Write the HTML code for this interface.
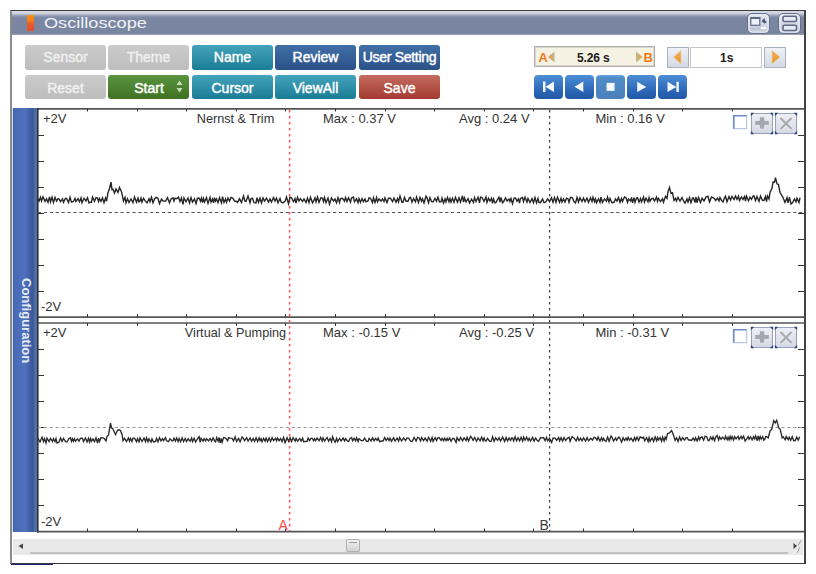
<!DOCTYPE html>
<html><head><meta charset="utf-8">
<style>
html,body{margin:0;padding:0;background:#fff;}
body{width:816px;height:574px;overflow:hidden;position:relative;font-family:"Liberation Sans",sans-serif;}
.abs{position:absolute;}
#win{position:absolute;left:10px;top:10px;width:792px;height:552px;border:1px solid #3a3a3a;border-left:2px solid #8c8c8c;border-right:2px solid #444;background:#fff;}
#title{position:absolute;left:12px;top:11px;width:792px;height:24px;background:linear-gradient(#d6dbe6 0px,#cbd1dc 2.5px,#a3abc0 4px,#8a94ad 5.5px,#7b87a2 7px,#7a86a1 21px,#727e99 22px,#a3abbf 24px);}
#title .t{position:absolute;left:31.5px;top:3px;font-size:15px;color:#eef1f6;transform:scaleX(1.21);transform-origin:0 0;}
#ticon{position:absolute;left:27px;top:15px;width:7px;height:16px;background:linear-gradient(#f68e14,#f28218 35%,#e85a26 55%,#e4522a);}
.tb{position:absolute;top:13px;width:21px;height:19px;border-radius:4px;background:linear-gradient(#b0b9cc,#8f9ab2);box-shadow:inset 0 0 0 1px #6c7891, inset 0 0 0 2px #c8cfdc;}
.btn{position:absolute;height:25px;width:81px;border-radius:3px;color:#fff;font-weight:normal;font-size:14px;line-height:25px;text-align:center;-webkit-text-stroke:0.45px currentColor;}
.gray{background:linear-gradient(#cbcbcb,#bdbdbd);color:#f0f0f0;}
.teal{background:linear-gradient(#43a3ba,#1b7c97);}
.blue{background:linear-gradient(#406fa6,#2a5188);}
.green{background:linear-gradient(#5a9440,#3f7222);}
.red{background:linear-gradient(#c56c60,#a33a30);}
.mb{position:absolute;top:75px;width:29px;height:24px;border-radius:4px;background:linear-gradient(#4d8fd6,#2a64b4 70%,#2258a8);}
#plots{position:absolute;left:0;top:0;}
</style></head>
<body>
<div id="win"></div>
<div id="title"><div class="t">Oscilloscope</div></div>
<div id="ticon"></div>
<svg class="abs" style="left:740px;top:10px" width="66" height="26">
 <defs><linearGradient id="tbg" x1="0" y1="0" x2="0" y2="1"><stop offset="0" stop-color="#e2e6ee"/><stop offset="1" stop-color="#c3cad8"/></linearGradient></defs>
 <rect x="7.5" y="3.5" width="22" height="20" rx="4.5" fill="url(#tbg)" stroke="#66728c"/>
 <rect x="9" y="5" width="19" height="17" rx="3.5" fill="none" stroke="#eef1f6" stroke-width="0.8"/>
 <rect x="10.8" y="7.8" width="9" height="7.5" fill="#eef1f7" stroke="#5d6886" stroke-width="1.2"/>
 <rect x="10.2" y="7" width="10.2" height="2" fill="#5d6886"/>
 <path d="M21.5 11 L24.5 8 L25 10.5 L27 12 L24.5 13.5Z" fill="#4a5478"/>
 <rect x="21" y="17" width="5" height="2" fill="#fafbfd"/>
 <rect x="10" y="17" width="10" height="3" fill="#c0c7d6"/>
 <rect x="38.5" y="3.5" width="22" height="20" rx="4.5" fill="url(#tbg)" stroke="#66728c"/>
 <rect x="40" y="5" width="19" height="17" rx="3.5" fill="none" stroke="#eef1f6" stroke-width="0.8"/>
 <rect x="43" y="6.2" width="13.5" height="5.3" rx="1.5" fill="#e6eaf2" stroke="#5f6a86" stroke-width="1.6"/>
 <rect x="43" y="15.2" width="13.5" height="5.3" rx="1.5" fill="#e6eaf2" stroke="#5f6a86" stroke-width="1.6"/>
</svg>

<div class="btn gray" style="left:25px;top:45px">Sensor</div>
<div class="btn gray" style="left:108px;top:45px">Theme</div>
<div class="btn teal" style="left:192px;top:45px">Name</div>
<div class="btn blue" style="left:275px;top:45px">Review</div>
<div class="btn blue" style="left:359px;top:45px;letter-spacing:-0.3px">User Setting</div>
<div class="btn gray" style="left:25px;top:75px;height:24px;line-height:26px">Reset</div>
<div class="btn green" style="left:108px;top:75px;height:24px;line-height:26px;text-indent:1px">Start</div>
<svg class="abs" style="left:176px;top:80px" width="8" height="14"><path d="M0.5 5 L3.5 0.5 L6.5 5Z M0.5 8 L3.5 12.5 L6.5 8Z" fill="#c6dcb8"/></svg>
<div class="btn teal" style="left:192px;top:75px;height:24px;line-height:26px">Cursor</div>
<div class="btn teal" style="left:275px;top:75px;height:24px;line-height:26px">ViewAll</div>
<div class="btn red" style="left:359px;top:75px;height:24px;line-height:26px">Save</div>

<div class="abs" style="left:534px;top:46px;width:119px;height:19px;border:1px solid #b0b0b0;box-shadow:inset 0 0 0 1px #d8d6cc;background:#f5f2e3;"></div>
<div class="abs" style="left:577px;top:48.5px;font-size:12px;font-weight:bold;line-height:19px;color:#202020;letter-spacing:-0.15px">5.26 s</div>

<div class="abs" style="left:667px;top:47px;width:20px;height:19px;border:1px solid #aab2c2;background:linear-gradient(#eef1f6,#d3d9e5);"></div>
<div class="abs" style="left:690px;top:47px;width:70px;height:19px;border:1px solid #c4c4c4;background:#fff;"></div>
<div class="abs" style="left:764px;top:47px;width:20px;height:19px;border:1px solid #aab2c2;background:linear-gradient(#eef1f6,#d3d9e5);"></div>
<div class="abs" style="left:720px;top:47.5px;font-size:12px;font-weight:bold;line-height:20px;color:#202020">1s</div>

<svg class="abs" style="left:534px;top:46px" width="260" height="24">
 <defs>
  <linearGradient id="og" x1="0" y1="0" x2="1" y2="0"><stop offset="0" stop-color="#f39a3a"/><stop offset="1" stop-color="#b8b89a"/></linearGradient>
  <linearGradient id="og2" x1="0" y1="0" x2="1" y2="0"><stop offset="0" stop-color="#b8b89a"/><stop offset="1" stop-color="#f39a3a"/></linearGradient>
  <linearGradient id="tg" x1="0" y1="0" x2="0" y2="1"><stop offset="0" stop-color="#f0b060"/><stop offset="1" stop-color="#e89030"/></linearGradient>
 </defs>
 <text x="4.5" y="16.4" font-family="Liberation Sans" font-weight="bold" font-size="13" fill="#f07a1a">A</text>
 <path d="M14 11 L20.5 5.5 L20.5 16.5Z" fill="url(#og)"/>
 <path d="M108.5 11 L102 5.5 L102 16.5Z" fill="url(#og2)"/>
 <text x="109.5" y="16.4" font-family="Liberation Sans" font-weight="bold" font-size="13" fill="#f07a1a">B</text>
 <path d="M139.5 11 L147 4.5 L147 18Z" fill="url(#tg)" stroke="#e8d090" stroke-width="0.8"/>
 <path d="M246 11 L238 4.5 L238 18Z" fill="url(#tg)" stroke="#e8d090" stroke-width="0.8"/>
</svg>
<div class="mb" style="left:534px"></div>
<div class="mb" style="left:565px"></div>
<div class="mb" style="left:596px;background:linear-gradient(#62a6e4 0,#4f8cc8 3px,#4a80bc)"></div>
<div class="mb" style="left:627px"></div>
<div class="mb" style="left:658px"></div>

<svg class="abs" style="left:530px;top:70px" width="170" height="34" fill="#f4f8fc">
 <rect x="13" y="11.5" width="2.5" height="10.5"/>
 <path d="M15.5 16.8 L24 11.5 L24 22Z"/>
 <path d="M44.5 16.8 L53.3 11.5 L53.3 22Z"/>
 <rect x="76.6" y="12.9" width="8" height="8"/>
 <path d="M116.3 16.9 L107.2 11.8 L107.2 22Z"/>
 <path d="M146.4 16.9 L137.5 11.8 L137.5 22Z"/>
 <rect x="146.4" y="11.8" width="2.4" height="10.2"/>
</svg>
<svg id="plots" width="816" height="574">
 <!-- sidebar -->
 <defs><linearGradient id="sbg" x1="13" y1="0" x2="37" y2="0" gradientUnits="userSpaceOnUse">
  <stop offset="0" stop-color="#4060a6"/><stop offset="0.12" stop-color="#4a6bb6"/><stop offset="0.5" stop-color="#4f71bd"/>
  <stop offset="0.72" stop-color="#3f5ea2"/><stop offset="0.84" stop-color="#395896"/><stop offset="0.92" stop-color="#5173ab"/><stop offset="1" stop-color="#4a68a0"/></linearGradient></defs>
 <rect x="12" y="108" width="1" height="424" fill="#d4dbe8"/>
 <rect x="13" y="108" width="24" height="424" fill="url(#sbg)"/>
 <text transform="translate(22,278) rotate(90)" font-family="Liberation Sans" font-weight="bold" font-size="13" fill="#e6ebf4">Configuration</text>
 <!-- plot frames -->
 <g stroke="#555" stroke-width="1.7" fill="none">
  <line x1="37" y1="108.8" x2="804" y2="108.8"/>
  <line x1="37" y1="317.1" x2="804" y2="317.1"/>
  <line x1="37" y1="323.0" x2="804" y2="323.0"/>
  <line x1="37" y1="531.7" x2="804" y2="531.7"/>
 </g>
 <g stroke="#333" stroke-width="1.6" fill="none">
  <line x1="37.8" y1="108" x2="37.8" y2="532.5"/>
 </g>
 <g stroke="#333" stroke-width="1">
<line x1="87.5" y1="108.5" x2="87.5" y2="111.5"/>
<line x1="87.5" y1="314" x2="87.5" y2="317"/>
<line x1="137.5" y1="108.5" x2="137.5" y2="111.5"/>
<line x1="137.5" y1="314" x2="137.5" y2="317"/>
<line x1="186.5" y1="108.5" x2="186.5" y2="111.5"/>
<line x1="186.5" y1="314" x2="186.5" y2="317"/>
<line x1="236.5" y1="108.5" x2="236.5" y2="111.5"/>
<line x1="236.5" y1="314" x2="236.5" y2="317"/>
<line x1="285.5" y1="108.5" x2="285.5" y2="111.5"/>
<line x1="285.5" y1="314" x2="285.5" y2="317"/>
<line x1="335.5" y1="108.5" x2="335.5" y2="111.5"/>
<line x1="335.5" y1="314" x2="335.5" y2="317"/>
<line x1="385.5" y1="108.5" x2="385.5" y2="111.5"/>
<line x1="385.5" y1="314" x2="385.5" y2="317"/>
<line x1="434.5" y1="108.5" x2="434.5" y2="111.5"/>
<line x1="434.5" y1="314" x2="434.5" y2="317"/>
<line x1="484.5" y1="108.5" x2="484.5" y2="111.5"/>
<line x1="484.5" y1="314" x2="484.5" y2="317"/>
<line x1="533.5" y1="108.5" x2="533.5" y2="111.5"/>
<line x1="533.5" y1="314" x2="533.5" y2="317"/>
<line x1="583.5" y1="108.5" x2="583.5" y2="111.5"/>
<line x1="583.5" y1="314" x2="583.5" y2="317"/>
<line x1="633.5" y1="108.5" x2="633.5" y2="111.5"/>
<line x1="633.5" y1="314" x2="633.5" y2="317"/>
<line x1="682.5" y1="108.5" x2="682.5" y2="111.5"/>
<line x1="682.5" y1="314" x2="682.5" y2="317"/>
<line x1="732.5" y1="108.5" x2="732.5" y2="111.5"/>
<line x1="732.5" y1="314" x2="732.5" y2="317"/>
<line x1="38" y1="135.5" x2="44" y2="135.5"/>
<line x1="798" y1="135.5" x2="804" y2="135.5"/>
<line x1="38" y1="161.5" x2="44" y2="161.5"/>
<line x1="798" y1="161.5" x2="804" y2="161.5"/>
<line x1="38" y1="187.5" x2="44" y2="187.5"/>
<line x1="798" y1="187.5" x2="804" y2="187.5"/>
<line x1="38" y1="213.5" x2="44" y2="213.5"/>
<line x1="798" y1="213.5" x2="804" y2="213.5"/>
<line x1="38" y1="239.5" x2="44" y2="239.5"/>
<line x1="798" y1="239.5" x2="804" y2="239.5"/>
<line x1="38" y1="265.5" x2="44" y2="265.5"/>
<line x1="798" y1="265.5" x2="804" y2="265.5"/>
<line x1="38" y1="291.5" x2="44" y2="291.5"/>
<line x1="798" y1="291.5" x2="804" y2="291.5"/>
<line x1="87.5" y1="323" x2="87.5" y2="326"/>
<line x1="87.5" y1="528.5" x2="87.5" y2="531.5"/>
<line x1="137.5" y1="323" x2="137.5" y2="326"/>
<line x1="137.5" y1="528.5" x2="137.5" y2="531.5"/>
<line x1="186.5" y1="323" x2="186.5" y2="326"/>
<line x1="186.5" y1="528.5" x2="186.5" y2="531.5"/>
<line x1="236.5" y1="323" x2="236.5" y2="326"/>
<line x1="236.5" y1="528.5" x2="236.5" y2="531.5"/>
<line x1="285.5" y1="323" x2="285.5" y2="326"/>
<line x1="285.5" y1="528.5" x2="285.5" y2="531.5"/>
<line x1="335.5" y1="323" x2="335.5" y2="326"/>
<line x1="335.5" y1="528.5" x2="335.5" y2="531.5"/>
<line x1="385.5" y1="323" x2="385.5" y2="326"/>
<line x1="385.5" y1="528.5" x2="385.5" y2="531.5"/>
<line x1="434.5" y1="323" x2="434.5" y2="326"/>
<line x1="434.5" y1="528.5" x2="434.5" y2="531.5"/>
<line x1="484.5" y1="323" x2="484.5" y2="326"/>
<line x1="484.5" y1="528.5" x2="484.5" y2="531.5"/>
<line x1="533.5" y1="323" x2="533.5" y2="326"/>
<line x1="533.5" y1="528.5" x2="533.5" y2="531.5"/>
<line x1="583.5" y1="323" x2="583.5" y2="326"/>
<line x1="583.5" y1="528.5" x2="583.5" y2="531.5"/>
<line x1="633.5" y1="323" x2="633.5" y2="326"/>
<line x1="633.5" y1="528.5" x2="633.5" y2="531.5"/>
<line x1="682.5" y1="323" x2="682.5" y2="326"/>
<line x1="682.5" y1="528.5" x2="682.5" y2="531.5"/>
<line x1="732.5" y1="323" x2="732.5" y2="326"/>
<line x1="732.5" y1="528.5" x2="732.5" y2="531.5"/>
<line x1="38" y1="349.5" x2="44" y2="349.5"/>
<line x1="798" y1="349.5" x2="804" y2="349.5"/>
<line x1="38" y1="375.5" x2="44" y2="375.5"/>
<line x1="798" y1="375.5" x2="804" y2="375.5"/>
<line x1="38" y1="401.5" x2="44" y2="401.5"/>
<line x1="798" y1="401.5" x2="804" y2="401.5"/>
<line x1="38" y1="427.5" x2="44" y2="427.5"/>
<line x1="798" y1="427.5" x2="804" y2="427.5"/>
<line x1="38" y1="453.5" x2="44" y2="453.5"/>
<line x1="798" y1="453.5" x2="804" y2="453.5"/>
<line x1="38" y1="479.5" x2="44" y2="479.5"/>
<line x1="798" y1="479.5" x2="804" y2="479.5"/>
<line x1="38" y1="505.5" x2="44" y2="505.5"/>
<line x1="798" y1="505.5" x2="804" y2="505.5"/>
 </g>
 <g stroke="#555" stroke-width="1" stroke-dasharray="3.2,2.7">
  <line x1="38" y1="212.5" x2="804" y2="212.5"/>
  <line x1="38" y1="427.5" x2="804" y2="427.5" stroke="#999"/>
 </g>
 <g stroke="#ff5252" stroke-width="1.5" stroke-dasharray="2.5,3.5">
  <line x1="289.6" y1="110" x2="289.6" y2="531"/>
 </g>
 <g stroke="#3a3a3a" stroke-width="1.2" stroke-dasharray="2.5,3.5">
  <line x1="549.6" y1="110" x2="549.6" y2="531"/>
 </g>
 <polyline points="38.0,198.8 39.0,201.1 40.5,197.3 41.5,201.0 43.0,196.8 45.0,201.4 46.5,198.8 48.0,202.3 49.5,196.9 50.5,201.9 52.0,197.2 53.5,202.4 55.0,197.3 56.5,201.1 58.0,198.8 59.0,198.9 60.5,201.6 62.5,198.9 63.5,202.4 65.5,198.3 66.5,198.4 68.5,202.5 70.0,197.2 71.5,202.1 73.5,201.5 75.0,198.3 76.0,201.4 78.0,198.7 79.5,201.7 81.0,198.0 82.0,202.7 84.0,198.3 86.0,201.0 87.5,197.8 89.0,202.9 90.0,202.2 91.5,202.2 92.5,197.0 94.5,201.2 96.0,197.6 97.5,198.0 98.5,201.5 99.5,198.6 101.0,201.4 102.5,197.8 104.0,202.6 105.5,198.0 106.5,201.2 108.0,192.7 109.5,188.5 111.0,182.2 112.0,189.7 113.0,189.2 114.5,193.1 116.0,189.0 118.0,192.4 119.5,187.5 121.5,191.7 123.5,200.9 125.0,197.4 126.0,202.9 127.5,198.7 129.0,202.5 131.0,199.0 133.0,202.6 134.5,197.0 136.5,202.2 138.0,198.1 139.0,202.0 140.0,201.0 141.0,198.0 142.0,202.2 143.5,198.2 145.5,201.4 147.0,202.8 149.0,198.8 150.0,201.8 151.5,197.2 153.0,202.8 154.5,198.9 156.0,197.4 158.0,198.3 159.5,203.6 161.5,199.1 163.0,201.0 164.5,201.1 165.5,201.3 167.5,197.7 169.5,202.8 171.0,199.0 173.0,197.8 174.0,201.1 175.0,198.3 177.0,198.5 178.5,197.1 180.0,201.6 181.5,198.0 183.0,204.5 184.0,197.9 186.0,201.8 188.0,198.0 189.5,203.0 191.0,197.6 192.5,202.2 194.5,198.9 196.0,203.5 197.5,198.2 199.0,198.0 200.5,201.3 201.5,198.0 202.5,202.6 203.5,198.5 204.5,202.0 206.5,197.6 208.0,203.4 210.0,197.4 211.0,202.1 212.5,199.0 213.5,202.8 214.5,197.7 215.5,201.0 216.5,199.0 218.0,202.7 219.5,197.7 221.5,202.8 222.5,196.6 224.0,202.3 225.5,199.0 226.5,202.3 228.0,198.1 229.5,201.1 231.0,197.4 233.0,198.3 234.5,201.1 236.0,201.2 237.5,202.4 239.5,198.8 241.5,202.4 243.5,196.0 245.0,201.2 246.0,201.5 248.0,195.9 250.0,202.7 251.0,198.5 252.5,198.2 254.0,202.7 256.0,202.9 257.0,197.6 258.5,202.3 260.0,198.2 261.5,203.0 263.0,197.9 264.5,201.1 266.5,198.1 268.5,202.1 270.0,198.9 271.5,202.0 273.5,197.5 275.0,201.0 276.5,198.0 278.0,202.8 280.0,198.4 281.0,201.8 283.0,202.9 285.0,201.4 286.5,197.1 288.5,203.8 290.0,197.2 291.5,197.8 293.5,201.7 295.0,198.6 296.0,203.0 297.5,197.2 299.0,201.0 300.5,198.7 302.5,201.4 304.0,199.0 306.0,202.6 307.5,198.0 309.0,202.6 310.5,197.2 312.5,202.8 313.5,201.2 315.0,197.8 316.0,201.8 317.5,197.0 319.0,202.3 321.0,197.7 322.5,198.2 323.5,201.6 324.5,197.5 326.0,202.7 328.0,198.0 329.5,204.2 331.5,197.8 333.5,201.0 335.0,199.0 336.5,202.9 338.0,197.7 339.5,202.5 340.5,198.6 342.5,198.3 344.5,201.2 345.5,197.5 347.0,201.6 348.5,197.8 350.5,202.1 351.5,198.0 353.5,197.0 354.5,201.8 356.5,198.8 358.0,202.7 359.0,198.5 360.5,202.4 362.0,198.6 363.5,201.7 365.0,198.9 366.0,201.9 368.0,201.0 369.0,197.8 370.5,198.3 372.5,202.5 373.5,197.8 375.0,202.4 376.5,197.6 377.5,201.8 379.0,199.0 381.0,201.1 382.5,198.9 384.0,201.5 385.0,197.9 387.0,202.5 388.5,198.2 390.5,198.2 392.5,201.7 394.0,197.9 396.0,202.2 397.5,198.5 398.5,201.9 400.0,196.0 402.0,202.2 403.0,202.2 404.5,197.3 406.0,201.3 408.0,201.2 409.5,197.6 410.5,197.3 412.0,202.2 413.5,198.5 415.5,201.8 416.5,197.0 418.5,202.5 420.0,197.4 421.5,201.1 422.5,198.8 424.0,203.0 426.0,196.2 427.0,197.6 428.5,202.8 430.0,197.6 431.5,201.4 433.0,201.9 435.0,198.5 436.5,201.3 438.0,197.2 439.5,202.0 441.0,201.9 442.0,198.0 443.5,203.0 445.0,198.9 446.0,202.0 447.5,197.5 449.0,201.8 450.0,198.6 451.0,202.1 452.5,198.2 454.0,202.2 455.5,197.4 457.5,202.2 459.0,197.8 460.5,202.1 462.5,195.8 463.5,202.1 464.5,197.9 466.0,202.0 468.0,198.7 469.5,203.0 471.5,199.1 473.5,202.3 474.5,197.7 476.0,201.5 478.0,197.2 479.5,202.9 480.5,197.2 482.0,197.5 484.0,201.4 486.0,197.0 487.0,202.4 488.5,198.3 490.0,201.0 491.5,198.2 492.5,203.4 493.5,199.0 495.0,202.9 496.0,202.5 498.0,198.7 499.0,197.2 500.0,202.2 501.0,197.4 502.5,202.7 504.0,201.0 505.5,197.8 507.0,201.0 509.0,198.9 510.0,201.4 511.0,198.5 512.5,203.7 514.0,198.1 515.5,197.9 517.0,201.2 518.5,198.9 519.5,203.0 520.5,198.4 522.5,197.5 523.5,201.5 525.0,197.2 527.0,202.1 528.0,198.4 530.0,202.5 532.0,198.6 533.5,202.8 535.0,197.5 536.5,202.9 538.0,198.4 539.0,202.3 540.5,202.6 542.5,198.9 544.0,202.6 546.0,201.8 547.5,198.8 549.5,201.4 551.5,197.7 553.0,202.2 554.5,197.6 556.0,202.4 557.5,197.1 559.5,202.3 561.0,198.3 562.0,202.0 563.5,198.9 565.0,202.0 566.5,198.2 568.0,198.7 569.0,202.2 570.5,197.4 572.5,197.8 574.0,201.5 575.5,202.9 577.0,197.5 578.5,202.1 580.0,197.8 582.0,201.5 583.5,198.1 585.0,201.7 587.0,198.1 588.5,202.3 590.5,197.8 592.0,201.5 593.0,197.2 594.5,201.6 595.5,198.9 596.5,202.7 598.5,198.8 600.0,202.3 601.0,197.2 602.5,202.4 604.5,198.9 606.5,201.2 607.5,197.2 609.0,202.0 610.0,198.4 612.0,202.7 614.0,202.3 615.5,199.0 617.0,201.1 618.5,197.6 620.0,202.3 621.5,198.4 622.5,201.5 624.5,197.0 626.0,197.7 627.5,202.4 628.5,199.0 630.5,201.0 631.5,197.4 632.5,202.8 634.0,197.6 635.0,202.3 636.5,198.1 637.5,197.7 639.0,202.1 640.5,198.5 641.5,202.0 643.5,197.2 644.5,202.1 646.0,198.2 648.0,201.8 649.0,197.7 650.0,201.2 651.5,198.6 653.0,198.3 654.5,201.1 656.5,197.1 657.5,201.4 658.5,198.4 660.5,201.6 662.5,198.7 663.5,202.1 665.5,196.2 667.0,198.4 668.0,191.6 669.5,187.6 671.0,193.4 672.5,192.8 674.0,200.4 675.5,198.3 676.5,201.0 678.0,197.3 680.0,201.1 682.0,197.5 683.5,201.0 685.0,203.2 687.0,198.9 688.0,202.1 689.5,197.8 691.0,202.6 692.5,198.0 693.5,198.0 695.0,202.5 696.0,197.0 697.0,202.7 698.5,197.4 700.5,202.5 702.0,198.3 704.0,200.9 706.0,197.1 708.0,196.2 709.5,202.0 711.5,197.0 713.0,197.6 714.5,198.5 715.5,200.5 717.5,198.2 719.0,200.9 720.0,197.6 721.5,200.4 723.0,201.9 724.5,197.8 725.5,196.2 727.0,201.7 729.0,196.5 730.5,200.0 732.0,196.4 734.0,199.6 735.5,196.1 737.0,199.4 738.5,196.2 739.5,200.6 741.5,196.9 743.0,199.5 744.5,196.5 745.5,201.0 746.5,196.0 748.5,200.7 750.0,197.1 751.5,199.3 753.0,196.2 754.0,195.8 755.5,200.5 757.0,196.4 759.0,201.4 760.5,196.0 762.5,200.5 764.0,200.3 765.5,196.5 766.5,201.6 767.5,195.9 769.0,199.0 770.0,192.5 772.0,188.4 773.0,182.1 774.5,182.2 775.5,177.7 777.0,183.8 778.5,184.5 780.0,192.5 781.5,194.9 783.0,197.5 785.0,202.4 787.0,197.7 788.0,202.8 789.5,197.3 791.0,204.0 792.5,202.8 794.5,199.0 796.0,201.8 797.0,198.2 799.0,202.6 800.0,197.7" fill="none" stroke="#262626" stroke-width="1.4"/>
 <polyline points="38.0,438.4 40.0,442.0 42.0,437.1 43.5,441.6 44.5,438.6 46.0,443.0 47.0,438.2 49.0,441.6 50.5,438.4 52.5,441.4 53.5,438.7 55.0,441.6 56.0,438.6 57.0,443.1 59.0,442.1 60.5,438.1 62.0,441.4 63.5,438.4 65.5,441.6 67.0,441.9 69.0,438.5 70.5,437.8 71.5,441.4 72.5,438.9 73.5,441.3 74.5,438.8 75.5,441.3 77.5,438.9 79.0,441.1 80.5,438.2 82.5,438.3 83.5,441.5 85.5,438.0 87.0,442.0 88.5,438.3 89.5,442.0 90.5,438.5 91.5,441.3 93.0,438.9 94.5,441.7 96.0,437.8 97.5,443.1 98.5,438.1 99.5,441.5 101.0,437.8 103.0,437.9 104.0,438.3 106.0,441.0 107.0,436.4 108.5,435.2 110.5,423.2 111.5,428.0 112.5,428.3 114.0,431.2 115.5,434.7 117.5,430.3 119.0,429.8 120.5,430.6 122.0,434.5 123.0,440.6 124.5,438.3 126.5,441.4 128.5,437.9 129.5,441.1 130.5,438.4 132.0,441.5 133.0,438.1 134.5,438.1 136.5,441.7 137.5,438.6 139.0,441.8 140.0,437.8 142.0,441.5 144.0,438.1 145.5,441.6 146.5,437.8 148.0,441.8 149.0,438.8 151.0,442.1 152.0,438.9 153.5,442.0 155.5,441.4 156.5,438.4 158.0,441.8 159.5,437.7 161.0,440.9 162.5,438.7 163.5,440.7 165.5,437.6 166.5,440.8 168.5,441.7 170.0,438.8 172.0,440.8 173.0,440.8 174.0,438.2 175.5,441.1 176.6,438.1 178.1,441.6 179.1,438.4 180.6,441.8 182.1,437.8 183.6,441.6 185.1,438.5 186.6,441.5 188.1,438.8 190.1,441.2 191.6,438.1 192.6,441.5 194.1,438.2 195.6,442.0 197.6,438.6 199.1,436.6 200.1,442.4 201.1,438.3 203.1,441.1 204.1,438.6 205.6,440.9 206.6,438.8 208.6,440.9 210.1,438.5 211.6,441.2 213.1,437.8 214.6,441.1 215.6,441.9 216.6,437.6 218.1,441.1 219.1,437.5 220.1,443.0 221.1,438.5 222.1,442.3 223.6,437.6 225.6,438.1 227.6,440.7 228.6,437.6 230.1,438.1 232.1,438.3 233.6,441.0 235.1,436.9 236.6,441.4 238.6,438.4 240.1,441.8 242.1,436.9 243.1,437.9 244.6,440.7 246.6,437.7 248.1,441.1 250.1,438.0 251.6,441.3 253.1,438.5 254.6,441.4 256.1,437.8 257.6,441.5 259.1,437.9 260.1,440.6 261.1,438.7 262.1,441.7 263.6,438.3 265.1,441.2 266.1,438.2 267.6,441.5 269.1,437.9 270.6,441.5 272.1,437.6 273.6,440.6 275.6,438.2 276.6,440.8 277.6,438.1 279.1,440.7 280.6,438.6 282.1,441.6 283.6,437.5 285.1,442.6 287.1,437.7 288.6,441.2 290.1,437.7 291.6,441.4 293.1,437.5 295.1,441.2 296.1,438.4 297.6,441.3 299.6,438.4 301.1,441.0 302.6,438.1 303.6,441.7 305.1,441.5 307.1,441.3 308.1,438.2 309.6,440.7 311.1,438.2 312.6,438.6 313.6,440.7 314.6,438.7 315.6,440.7 317.1,438.1 319.1,440.8 320.6,437.5 322.1,441.0 323.1,437.8 324.6,441.0 326.1,438.6 327.1,437.5 328.6,441.2 330.1,438.5 331.6,441.8 332.6,436.7 334.1,440.5 335.1,442.2 336.6,438.4 337.6,441.7 339.6,438.5 341.1,441.0 343.1,438.1 344.6,440.9 345.6,438.6 347.6,441.2 348.6,441.5 350.1,438.2 351.6,437.7 352.6,440.7 354.1,438.3 355.6,440.9 356.6,437.8 358.1,441.5 359.1,438.6 361.1,440.5 363.1,440.6 364.6,438.1 366.6,441.3 368.1,441.4 369.1,438.4 371.1,440.9 372.6,437.8 374.1,440.8 375.6,438.4 377.1,440.4 378.1,438.0 379.6,441.6 381.6,441.0 383.1,441.1 384.6,437.6 386.1,440.5 387.6,438.1 389.1,440.6 390.1,438.1 391.6,441.2 393.6,437.7 395.1,441.0 397.1,438.0 398.6,441.1 399.6,437.5 401.6,441.0 403.6,437.9 405.6,440.5 407.1,438.0 408.6,438.2 410.6,441.1 412.1,441.5 414.1,437.4 416.1,441.0 417.6,437.3 419.1,438.0 420.6,440.9 421.6,437.5 423.6,440.6 425.1,438.0 427.1,441.2 428.6,437.3 430.6,441.3 432.1,437.4 433.1,441.4 435.1,437.7 436.6,440.6 437.6,438.1 439.1,437.6 441.1,440.5 442.1,438.3 443.6,440.7 444.6,438.2 446.1,440.6 447.1,438.4 448.1,440.3 449.6,437.9 451.1,441.3 452.6,438.5 454.1,438.5 456.1,442.5 457.1,437.6 459.1,440.9 460.6,437.5 462.6,440.8 464.1,437.8 466.1,440.5 467.1,437.3 468.6,441.0 470.6,436.3 471.6,437.7 473.1,440.3 474.6,437.5 476.6,441.3 478.1,437.8 480.1,440.8 481.6,437.2 483.1,440.8 484.1,437.9 485.1,440.6 486.1,441.1 487.6,438.3 489.6,441.4 491.1,441.4 492.6,436.7 494.1,441.4 495.6,437.9 497.6,440.3 499.1,437.7 500.6,441.0 502.6,437.1 504.6,441.4 506.1,437.4 507.6,440.9 509.1,437.9 510.6,440.5 511.6,438.0 512.6,437.9 513.6,441.0 515.1,436.8 516.6,440.8 518.1,437.8 519.6,440.9 521.1,437.3 522.6,441.0 523.6,437.0 525.1,440.2 526.6,437.1 528.1,440.5 529.1,438.3 530.6,441.1 532.6,437.4 534.1,441.1 535.6,438.0 537.1,440.2 538.6,441.3 540.6,437.6 542.1,437.8 543.6,437.6 545.1,440.6 546.6,437.4 547.6,440.9 549.6,438.3 551.6,442.4 553.1,438.0 555.1,438.1 556.6,440.4 558.6,437.6 559.6,440.8 561.1,437.7 562.6,441.0 564.1,437.5 565.6,440.5 567.6,438.0 569.1,437.3 570.1,441.3 572.1,436.5 574.1,438.2 576.1,440.9 577.6,437.2 579.1,440.6 580.6,438.1 582.1,440.9 583.6,437.9 585.6,441.0 587.1,437.6 588.6,440.8 590.6,438.3 592.5,440.1 594.0,437.3 595.5,437.8 597.0,440.2 598.1,437.1 600.0,441.1 601.5,437.7 602.6,440.5 603.6,438.3 604.6,440.5 606.1,441.3 607.6,437.0 609.1,441.3 611.1,436.0 612.1,437.5 613.6,441.0 615.6,438.0 616.6,440.4 618.6,437.2 619.6,437.6 621.6,442.2 623.1,437.7 624.6,440.5 626.1,438.1 627.1,440.3 628.1,437.5 629.6,440.2 631.1,438.2 633.1,441.2 634.6,437.4 635.6,440.4 637.1,437.2 638.6,440.5 640.1,436.7 642.1,438.1 643.6,437.1 644.6,440.9 646.6,437.7 648.1,441.5 649.1,437.6 650.1,441.2 652.1,437.9 653.6,441.3 655.1,437.0 656.6,440.8 657.6,437.5 658.6,440.0 660.1,437.5 661.6,441.2 662.6,437.1 664.1,441.1 665.1,437.2 666.1,439.4 667.6,433.5 669.6,433.0 671.6,430.6 673.1,434.0 675.1,440.4 676.6,437.8 678.1,441.5 679.6,436.9 681.1,440.4 682.6,437.7 684.6,440.0 686.1,437.6 687.1,437.7 688.6,440.0 690.1,440.0 691.6,440.4 693.1,438.0 694.6,440.7 695.6,437.7 697.1,440.9 698.6,436.9 699.6,439.9 700.6,437.5 702.1,436.9 703.6,440.2 705.1,436.2 706.6,436.6 708.1,440.5 709.1,440.5 710.6,437.0 712.1,439.6 713.1,436.9 714.6,440.7 715.6,437.4 717.1,435.4 718.6,440.0 719.6,436.8 721.1,439.3 722.6,437.1 724.6,439.4 725.6,436.2 727.1,439.8 728.1,437.2 729.1,439.9 730.1,436.5 731.1,439.3 732.1,436.5 733.6,440.0 734.6,436.6 736.1,438.8 738.1,436.4 739.1,439.4 741.1,436.4 742.1,438.7 743.6,436.2 745.1,441.0 746.6,439.1 748.1,436.6 749.1,439.3 750.6,436.8 752.1,439.9 753.6,436.6 754.7,439.0 755.7,435.9 757.2,440.7 758.2,435.8 759.2,439.7 760.2,436.5 761.2,439.0 762.7,436.6 763.7,440.2 764.7,439.5 765.7,436.7 766.7,436.7 768.2,437.8 770.2,430.5 771.7,429.6 773.7,420.6 775.2,422.9 776.7,420.2 778.7,427.9 780.2,429.3 782.2,437.8 783.2,436.8 785.2,439.8 786.2,436.5 788.2,439.8 789.2,437.2 790.7,440.4 792.2,436.6 793.7,440.7 795.2,440.6 796.7,437.2 798.2,440.2 799.7,436.8" fill="none" stroke="#2a2a2a" stroke-width="1.35"/>
 <g font-family="Liberation Sans" font-size="13" fill="#333">
  <text x="43" y="122.5">+2V</text>
  <text x="41" y="311">-2V</text>
  <text x="43" y="337">+2V</text>
  <text x="41" y="526">-2V</text>
  <text x="235.5" y="122.5" text-anchor="middle" font-size="12.7">Nernst &amp; Trim</text>
  <text x="323" y="122.5">Max : 0.37 V</text>
  <text x="459" y="122.5">Avg : 0.24 V</text>
  <text x="595.5" y="122.5">Min : 0.16 V</text>
  <text x="235.5" y="337" text-anchor="middle" font-size="12.7">Virtual &amp; Pumping</text>
  <text x="323" y="337">Max : -0.15 V</text>
  <text x="459" y="337">Avg : -0.25 V</text>
  <text x="595.5" y="337">Min : -0.31 V</text>
  <text x="278.5" y="529.5" fill="#ff4a4a" font-size="14">A</text>
  <text x="539.5" y="529.5" fill="#404040" font-size="14">B</text>
 </g>
</svg>

<svg class="abs" style="left:728px;top:110px" width="74" height="26">
 <defs><linearGradient id="pbga" x1="0" y1="0" x2="0" y2="1"><stop offset="0" stop-color="#eef0f6"/><stop offset="1" stop-color="#d3d8e5"/></linearGradient></defs>
 <rect x="4.5" y="5" width="15" height="14.5" fill="#dfe6f2"/>
 <rect x="5.5" y="5.5" width="13" height="13" fill="#fff" stroke="#b7c8e6"/>
 <path d="M5.8 18.5 V5.8 H18.5" fill="none" stroke="#6a8cc8" stroke-width="1.6"/>
 <rect x="23.5" y="3.5" width="21" height="20" rx="2" fill="url(#pbga)" stroke="#98a1b8"/>
 <g fill="#2d4478"><path d="M22.8 2.8 h3.4 l-3.4 3.4z"/><path d="M45.2 2.8 h-3.4 l3.4 3.4z"/><path d="M22.8 24.2 h3.4 l-3.4 -3.4z"/><path d="M45.2 24.2 h-3.4 l3.4 -3.4z"/></g>
 <path d="M31.3 6.8 h5.4 v3.6 h4.6 v5 h-4.6 v3.8 h-5.4 v-3.8 h-4.6 v-5 h4.6z" fill="#a5a7ae" stroke="#eceef2" stroke-width="0.9"/>
 <rect x="47.5" y="3.5" width="21" height="20" rx="2" fill="url(#pbga)" stroke="#98a1b8"/>
 <g fill="#2d4478"><path d="M46.8 2.8 h3.4 l-3.4 3.4z"/><path d="M69.2 2.8 h-3.4 l3.4 3.4z"/><path d="M46.8 24.2 h3.4 l-3.4 -3.4z"/><path d="M69.2 24.2 h-3.4 l3.4 -3.4z"/></g>
 <path d="M52.5 8 L63.5 19 M63.5 8 L52.5 19" stroke="#eef0f4" stroke-width="4"/>
 <path d="M52.5 8 L63.5 19 M63.5 8 L52.5 19" stroke="#aaacb2" stroke-width="2.4"/>
</svg>
<svg class="abs" style="left:728px;top:324px" width="74" height="26">
 <defs><linearGradient id="pbgb" x1="0" y1="0" x2="0" y2="1"><stop offset="0" stop-color="#eef0f6"/><stop offset="1" stop-color="#d3d8e5"/></linearGradient></defs>
 <rect x="4.5" y="5" width="15" height="14.5" fill="#dfe6f2"/>
 <rect x="5.5" y="5.5" width="13" height="13" fill="#fff" stroke="#b7c8e6"/>
 <path d="M5.8 18.5 V5.8 H18.5" fill="none" stroke="#6a8cc8" stroke-width="1.6"/>
 <rect x="23.5" y="3.5" width="21" height="20" rx="2" fill="url(#pbgb)" stroke="#98a1b8"/>
 <g fill="#2d4478"><path d="M22.8 2.8 h3.4 l-3.4 3.4z"/><path d="M45.2 2.8 h-3.4 l3.4 3.4z"/><path d="M22.8 24.2 h3.4 l-3.4 -3.4z"/><path d="M45.2 24.2 h-3.4 l3.4 -3.4z"/></g>
 <path d="M31.3 6.8 h5.4 v3.6 h4.6 v5 h-4.6 v3.8 h-5.4 v-3.8 h-4.6 v-5 h4.6z" fill="#a5a7ae" stroke="#eceef2" stroke-width="0.9"/>
 <rect x="47.5" y="3.5" width="21" height="20" rx="2" fill="url(#pbgb)" stroke="#98a1b8"/>
 <g fill="#2d4478"><path d="M46.8 2.8 h3.4 l-3.4 3.4z"/><path d="M69.2 2.8 h-3.4 l3.4 3.4z"/><path d="M46.8 24.2 h3.4 l-3.4 -3.4z"/><path d="M69.2 24.2 h-3.4 l3.4 -3.4z"/></g>
 <path d="M52.5 8 L63.5 19 M63.5 8 L52.5 19" stroke="#eef0f4" stroke-width="4"/>
 <path d="M52.5 8 L63.5 19 M63.5 8 L52.5 19" stroke="#aaacb2" stroke-width="2.4"/>
</svg>
<!-- scrollbar -->
<div class="abs" style="left:13px;top:539px;width:790px;height:16px;background:#e9e9e9;"></div>
<div class="abs" style="left:30px;top:552px;width:758px;height:2px;background:#c2c2c2;"></div>
<div class="abs" style="left:346px;top:539px;width:14px;height:13px;border-radius:2px;background:linear-gradient(#f4f4f4,#d0d0d0);box-shadow:inset 0 0 0 1px #b0b0b0;"></div>
<div class="abs" style="left:349px;top:542px;width:8px;height:1px;background:#999;"></div>
<div class="abs" style="left:11px;top:564px;width:42px;height:1px;background:#22227a;"></div>
<svg class="abs" style="left:10px;top:534px" width="796" height="22">
 <path d="M8.5 12 L13 9.5 L13 15Z" fill="#444"/>
 <path d="M787 12 L783.5 9 L783.5 15Z" fill="#444"/>
 <path d="M791 6.5 L788 11.5 M789.5 13.5 L787.5 18.5" stroke="#999" stroke-width="1"/>
</svg>
</body></html>
